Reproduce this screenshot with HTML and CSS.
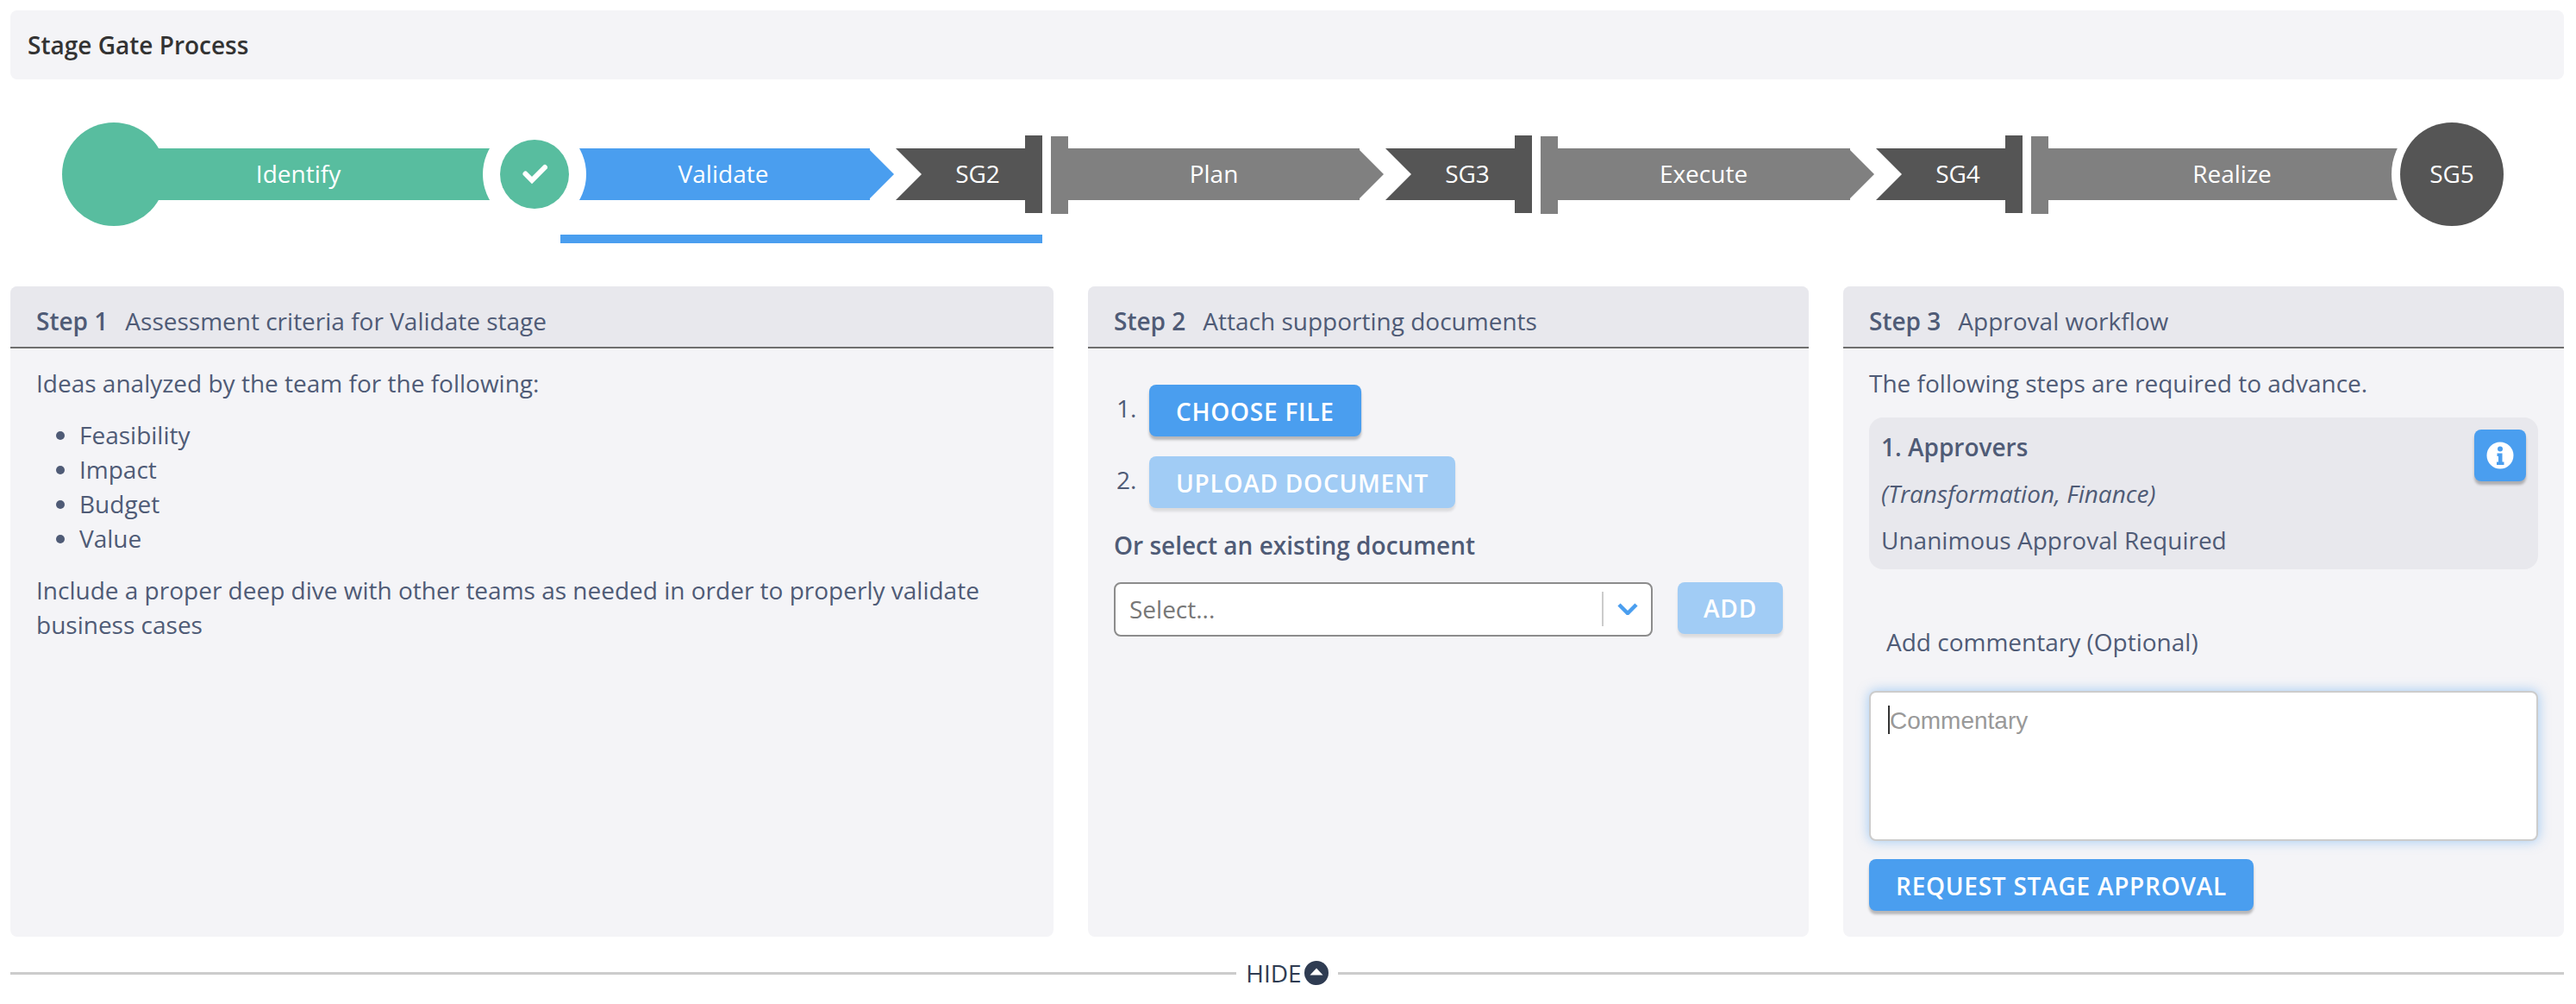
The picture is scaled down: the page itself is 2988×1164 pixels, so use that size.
FILE: index.html
```html
<!DOCTYPE html>
<html lang="en">
<head>
<meta charset="utf-8">
<title>Stage Gate Process</title>
<link rel="stylesheet" href="styles.css">
</head>
<body>
<header class="title-bar">Stage Gate Process</header>

<svg class="stepper" viewBox="0 92 2988 240" role="img" aria-label="Stage progress">
  <circle class="green" cx="132" cy="202" r="60"/>
  <rect class="green" x="132" y="172" width="488" height="60"/>
  <polygon class="blue" points="620,172 1009,172 1009,174 1037,202 1009,230 1009,232 620,232"/>
  <circle class="white" cx="620" cy="202" r="60"/>
  <circle class="green" cx="620" cy="202" r="40"/>
  <path class="check" d="M609.5 201.5l7.500 7.500 15-15"/>
  <text class="stage-label" x="346" y="212">Identify</text>
  <text class="stage-label" x="839" y="212">Validate</text>

  <polygon class="dark" points="1039,172 1189,172 1189,157 1209,157 1209,247 1189,247 1189,232 1039,232 1069,202"/>
  <text class="stage-label" x="1134" y="212">SG2</text>
  <polygon class="grey" points="1219,158 1239,158 1239,172 1577,172 1577,174 1605,202 1577,230 1577,232 1239,232 1239,248 1219,248"/>
  <text class="stage-label" x="1408" y="212">Plan</text>

  <polygon class="dark" points="1607,172 1757,172 1757,157 1777,157 1777,247 1757,247 1757,232 1607,232 1637,202"/>
  <text class="stage-label" x="1702" y="212">SG3</text>
  <polygon class="grey" points="1787,158 1807,158 1807,172 2146,172 2146,174 2174,202 2146,230 2146,232 1807,232 1807,248 1787,248"/>
  <text class="stage-label" x="1976" y="212">Execute</text>

  <polygon class="dark" points="2176,172 2326,172 2326,157 2346,157 2346,247 2326,247 2326,232 2176,232 2206,202"/>
  <text class="stage-label" x="2271" y="212">SG4</text>
  <polygon class="grey" points="2356,158 2376,158 2376,172 2844,172 2844,232 2376,232 2376,248 2356,248"/>
  <text class="stage-label" x="2589" y="212">Realize</text>

  <circle class="white" cx="2844" cy="202" r="70"/>
  <circle class="dark" cx="2844" cy="202" r="60"/>
  <text class="stage-label" x="2844" y="212">SG5</text>

  <rect class="blue" x="650" y="272" width="559" height="10"/>
</svg>

<main class="steps">
  <section class="card">
    <h2 class="card-head"><strong>Step 1</strong>Assessment criteria for Validate stage</h2>
    <div class="card-body">
      <p>Ideas analyzed by the team for the following:</p>
      <ul class="criteria">
        <li>Feasibility</li>
        <li>Impact</li>
        <li>Budget</li>
        <li>Value</li>
      </ul>
      <p>Include a proper deep dive with other teams as needed in order to properly validate business cases</p>
    </div>
  </section>

  <section class="card">
    <h2 class="card-head"><strong>Step 2</strong>Attach supporting documents</h2>
    <div class="card-body docs">
      <div class="doc-row"><span class="doc-num">1.</span><button class="btn" type="button">CHOOSE FILE</button></div>
      <div class="doc-row"><span class="doc-num">2.</span><button class="btn is-disabled" type="button">UPLOAD DOCUMENT</button></div>
      <p class="doc-heading">Or select an existing document</p>
      <div class="select-row">
        <div class="select">
          <span class="select-value">Select...</span>
          <span class="select-sep"></span>
          <svg class="select-arrow" viewBox="0 0 24 14"><path d="M2 2l10 10L22 2"/></svg>
        </div>
        <button class="btn is-disabled btn-add" type="button">ADD</button>
      </div>
    </div>
  </section>

  <section class="card">
    <h2 class="card-head"><strong>Step 3</strong>Approval workflow</h2>
    <div class="card-body">
      <p>The following steps are required to advance.</p>
      <div class="approvers">
        <div class="approver-text">
          <p class="approver-title">1. Approvers</p>
          <p class="approver-teams">(Transformation, Finance)</p>
          <p>Unanimous Approval Required</p>
        </div>
        <button class="info-btn" type="button" aria-label="Info">
          <svg viewBox="0 0 32 32"><circle class="info-disc" cx="16" cy="16" r="15.5"/><circle class="info-mark" cx="16" cy="8.5" r="3"/><path class="info-mark" d="M12.5 13.5h6v10h2v3.500h-8.500v-3.500h2v-6.500h-1.500z"/></svg>
        </button>
      </div>
      <label class="comment-label" for="commentary">Add commentary (Optional)</label>
      <div class="comment-wrap">
        <textarea class="comment" id="commentary" placeholder="Commentary"></textarea>
        <span class="comment-caret"></span>
      </div>
      <button class="btn" type="button">REQUEST STAGE APPROVAL</button>
    </div>
  </section>
</main>

<footer class="hide-row">
  <span class="hide-line"></span>
  <span class="hide-toggle">HIDE<svg viewBox="0 0 28 28"><circle class="hide-disc" cx="14" cy="14" r="14"/><path class="hide-caret" d="M14 8.500L21.500 16.500H6.500z"/></svg></span>
  <span class="hide-line"></span>
</footer>
</body>
</html>
```

FILE: styles.css
```css
* { box-sizing: border-box; }

html, body { margin: 0; background: #fff; }

body {
  padding: 12px 14px 0 12px;
  font-family: "Open Sans", sans-serif;
  font-size: 28px;
  line-height: 40px;
  color: #4f5b76;
}

p { margin: 0; }

.title-bar {
  height: 80px;
  padding: 20px 20px 0;
  background: #f4f4f7;
  border-radius: 8px;
  font-weight: 600;
  color: #333;
}

.stepper {
  display: block;
  width: 2988px;
  height: 240px;
  margin-left: -12px;
}

.green { fill: #58bd9f; }
.blue { fill: #4a9eef; }
.dark { fill: #555; }
.grey { fill: #808080; }
.white { fill: #fff; }
.check { fill: none; stroke: #fff; stroke-width: 6; stroke-linecap: round; stroke-linejoin: miter; }
.stage-label { font-size: 28px; fill: #fff; text-anchor: middle; }

.steps {
  display: grid;
  grid-template-columns: 1210px 836px 836px;
  column-gap: 40px;
  height: 754px;
}

.card {
  background: #f4f4f7;
  border-radius: 8px;
  overflow: hidden;
}

.card-head {
  height: 72px;
  margin: 0;
  padding: 20px 30px 0;
  background: #e8e8ed;
  border-bottom: 2px solid #6e6e6e;
  font-size: 28px;
  line-height: 40px;
  font-weight: 400;
}

.card-head strong { font-weight: 600; margin-right: 20px; }

.card-body { padding: 20px 30px 0; }

.criteria {
  margin: 20px 0;
  padding: 0 0 0 50px;
}

.docs { padding-top: 42px; }

.btn {
  display: block;
  height: 60px;
  padding: 2px 31px 0;
  border: 0;
  border-radius: 8px;
  background: #4a9eef;
  box-shadow: 0 4px 3px rgba(0, 0, 0, .25);
  font-family: inherit;
  font-size: 28px;
  font-weight: 600;
  letter-spacing: .75px;
  color: #fff;
}

.btn.is-disabled { background: #a1ccf5; box-shadow: 0 4px 3px rgba(0, 0, 0, .1); }

.doc-row { display: flex; margin-bottom: 23px; }

.doc-num { width: 41px; padding: 7px 0 0 3px; }

.doc-heading { margin-bottom: 23px; font-weight: 600; }

.select-row { display: flex; justify-content: space-between; align-items: flex-start; }

.select {
  display: flex;
  align-items: center;
  width: 625px;
  height: 63px;
  padding: 0 16px 2px;
  background: #fff;
  border: 2px solid #8c8c8c;
  border-radius: 8px;
  color: #777;
}

.select-value { flex: 1; }

.select-sep { width: 2px; height: 40px; background: #ccc; }

.select-arrow {
  width: 24px;
  height: 14px;
  margin-left: 16px;
  margin-right: -1px;
  fill: none;
  stroke: #4a9eef;
  stroke-width: 4.5;
}

.btn-add { width: 122px; padding: 0; }

.approvers {
  display: flex;
  justify-content: space-between;
  align-items: flex-start;
  height: 176px;
  margin-top: 20px;
  padding: 14px 14px 0;
  background: #e8e8ed;
  border-radius: 16px;
}

.approver-text p { margin-bottom: 14px; }

.approver-text .approver-title { font-weight: 600; }

.approver-text .approver-teams { font-style: italic; }

.info-btn {
  width: 60px;
  height: 60px;
  padding: 14px;
  border: 0;
  border-radius: 8px;
  background: #4a9eef;
  box-shadow: 0 4px 3px rgba(0, 0, 0, .25);
}

.info-btn svg { display: block; width: 32px; height: 32px; }

.info-disc { fill: #fff; }
.info-mark { fill: #4a9eef; }

.comment-label {
  display: block;
  margin-top: 64px;
  padding-left: 20px;
}

.comment-wrap {
  position: relative;
  margin: 37px 0 21px;
}

.comment {
  display: block;
  width: 776px;
  height: 174px;
  padding: 13px 22px;
  border: 2px solid #ccc;
  border-radius: 8px;
  outline: 0;
  background: #fff;
  box-shadow: 0 0 14px rgba(74, 158, 239, .5);
  font-family: "Liberation Sans", Arial, sans-serif;
  font-size: 28px;
  line-height: 40px;
  color: #333;
  resize: none;
}

.comment::placeholder { color: #999; opacity: 1; }

.comment-caret {
  position: absolute;
  left: 22px;
  top: 17px;
  width: 2px;
  height: 33px;
  background: #333;
}

.hide-row {
  display: flex;
  align-items: center;
  gap: 11px;
  height: 28px;
  margin-top: 28px;
  color: #2f3c52;
}

.hide-line { flex: 1; height: 3px; background: #ccc; }

.hide-toggle { display: flex; align-items: center; gap: 3px; font-size: 28px; line-height: 28px; }

.hide-toggle svg { display: block; width: 28px; height: 28px; }

.hide-disc { fill: #2f3c52; }
.hide-caret { fill: #fff; }
```
